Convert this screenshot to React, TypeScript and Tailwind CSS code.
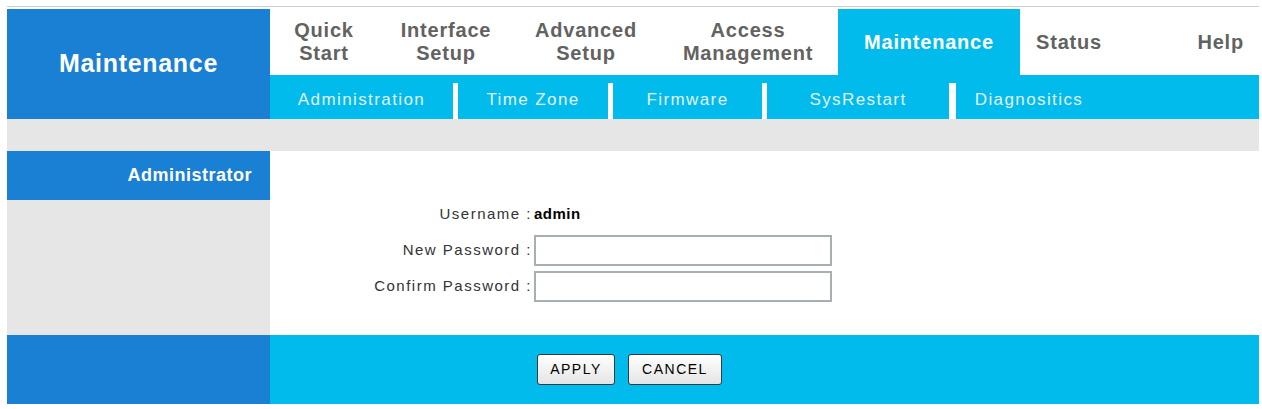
import React from "react";

const tabs: { lines: string[]; w: string; active?: boolean; right?: boolean }[] = [
  { lines: ["Quick", "Start"], w: "w-[108px]" },
  { lines: ["Interface", "Setup"], w: "w-[136px]" },
  { lines: ["Advanced", "Setup"], w: "w-[144px]" },
  { lines: ["Access", "Management"], w: "w-[180px]" },
  { lines: ["Maintenance"], w: "w-[182px]", active: true },
  { lines: ["Status"], w: "w-[98px]" },
];

function Sep({ w = "w-[5px]" }: { w?: string }) {
  return <div className={`${w} mt-[8px] self-stretch bg-white`} />;
}

function SubItem({ label, w }: { label: string; w: string }) {
  return (
    <div className={`${w} flex items-center justify-center pt-[6px] text-[17px] tracking-[1.4px] text-[#e2f2fb]`}>
      {label}
    </div>
  );
}

export default function App() {
  return (
    <div className="w-[1262px] h-[409px] bg-white pt-[6px] pl-[7px] font-['Liberation_Sans',Arial,sans-serif]">
      <div className="w-[1252px] border-t border-[#cfcfcf] pt-[2px]">
        {/* header */}
        <div className="flex h-[110px]">
          <div className="w-[263px] bg-[#1a80d3] flex items-center justify-center text-white font-bold text-[25px] tracking-[0.7px]">
            Maintenance
          </div>
          <div className="flex-1 flex flex-col">
            <div className="h-[66px] flex bg-white">
              {tabs.map((t) => (
                <div
                  key={t.lines.join(" ")}
                  className={`${t.w} flex flex-col items-center justify-center font-bold text-[20px] leading-[23px] tracking-[0.8px] ${
                    t.active ? "bg-[#00bbeb] text-white" : "text-[#626262]"
                  }`}
                >
                  {t.lines.map((l) => (
                    <span key={l}>{l}</span>
                  ))}
                </div>
              ))}
              <div className="flex-1 flex items-center justify-end pr-[15px] font-bold text-[20px] leading-[23px] tracking-[0.8px] text-[#626262]">
                Help
              </div>
            </div>
            <div className="h-[44px] flex bg-[#00bbeb]">
              <SubItem label="Administration" w="w-[183px]" />
              <Sep />
              <SubItem label="Time Zone" w="w-[150px]" />
              <Sep />
              <SubItem label="Firmware" w="w-[149px]" />
              <Sep />
              <SubItem label="SysRestart" w="w-[182px]" />
              <Sep w="w-[7px]" />
              <SubItem label="Diagnositics" w="w-[146px]" />
            </div>
          </div>
        </div>

        {/* gray band */}
        <div className="h-[32px] bg-[#e6e6e6]" />

        {/* main */}
        <div className="flex h-[184px]">
          <div className="w-[263px] flex flex-col">
            <div className="h-[49px] bg-[#1a80d3] flex items-center justify-end pr-[18px] text-white font-bold text-[18px] tracking-[0.5px]">
              Administrator
            </div>
            <div className="flex-1 bg-[#e6e6e6]" />
          </div>
          <div className="flex-1 bg-white pt-[45px]">
            <div className="grid grid-cols-[262px_auto] gap-x-[2px] text-[15px] tracking-[1.5px] text-[#333]">
              <div className="h-[36px] flex items-center justify-end">Username :</div>
              <div className="h-[36px] flex items-center font-bold text-black tracking-[0.5px]">admin</div>
              <div className="h-[36px] flex items-center justify-end">New Password :</div>
              <div className="h-[36px] flex items-center">
                <input type="password" className="w-[298px] h-[31px] border-2 border-[#a7afb4] bg-white outline-none" />
              </div>
              <div className="h-[36px] flex items-center justify-end">Confirm Password :</div>
              <div className="h-[36px] flex items-center">
                <input type="password" className="w-[298px] h-[31px] border-2 border-[#a7afb4] bg-white outline-none" />
              </div>
            </div>
          </div>
        </div>

        {/* bottom */}
        <div className="flex h-[69px]">
          <div className="w-[263px] bg-[#1a80d3]" />
          <div className="flex-1 bg-[#00bbeb] flex items-center pl-[267px] gap-[13px]">
            <button className="w-[78px] h-[31px] rounded-[3px] border border-[#3a3a3a] bg-gradient-to-b from-white to-[#e4e4e4] text-[14px] tracking-[1.5px] text-black">
              APPLY
            </button>
            <button className="w-[94px] h-[31px] rounded-[3px] border border-[#3a3a3a] bg-gradient-to-b from-white to-[#e4e4e4] text-[14px] tracking-[1.5px] text-black">
              CANCEL
            </button>
          </div>
        </div>
      </div>
    </div>
  );
}
